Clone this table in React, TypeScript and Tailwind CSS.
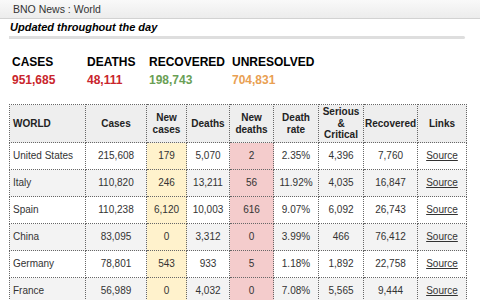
const stats = [
  { label: "CASES", value: "951,685", color: "text-[#c9252c]", w: "w-[75px]" },
  { label: "DEATHS", value: "48,111", color: "text-[#c9252c]", w: "w-[62px]" },
  { label: "RECOVERED", value: "198,743", color: "text-[#6a9f55]", w: "w-[83px]" },
  { label: "UNRESOLVED", value: "704,831", color: "text-[#e9a052]", w: "w-[100px]" },
];

const rows = [
  ["United States", "215,608", "179", "5,070", "2", "2.35%", "4,396", "7,760"],
  ["Italy", "110,820", "246", "13,211", "56", "11.92%", "4,035", "16,847"],
  ["Spain", "110,238", "6,120", "10,003", "616", "9.07%", "6,092", "26,743"],
  ["China", "83,095", "0", "3,312", "0", "3.99%", "466", "76,412"],
  ["Germany", "78,801", "543", "933", "5", "1.18%", "1,892", "22,758"],
  ["France", "56,989", "0", "4,032", "0", "7.08%", "5,565", "9,444"],
];

const cell = "border border-dotted border-[#666] px-[3px]";

export default function App() {
  return (
    <div className="w-[480px] h-[300px] overflow-hidden bg-white font-['Liberation_Sans',Arial,sans-serif]">
      {/* top bar */}
      <div className="h-[19px] border-b border-[#d2d2d2] bg-gradient-to-b from-[#f9f9f9] to-[#ececec] pl-[13px] text-[10.5px] leading-[18px] text-[#333]">
        BNO News : World
      </div>
      <div className="pl-[10px] pt-[1px] text-[11px] font-bold italic leading-[15px] text-black">
        Updated throughout the day
      </div>
      <div className="ml-[9px] mt-[1px] h-[3px] w-[456px] rounded-r-full bg-[#dedede]" />

      {/* totals */}
      <div className="flex pl-[12px] pt-[15px]">
        {stats.map((s) => (
          <div key={s.label} className={s.w}>
            <div className="text-[12px] font-bold leading-[16px] text-black">{s.label}</div>
            <div className={`mt-[1px] text-[12px] font-bold leading-[18px] ${s.color}`}>{s.value}</div>
          </div>
        ))}
      </div>

      {/* table */}
      <table className="ml-[9px] mt-[15px] w-[457px] table-fixed border-collapse text-[10px] leading-[11.5px] text-[#333]">
        <colgroup>
          <col className="w-[76px]" />
          <col className="w-[61px]" />
          <col className="w-[40px]" />
          <col className="w-[43px]" />
          <col className="w-[44px]" />
          <col className="w-[45px]" />
          <col className="w-[45px]" />
          <col className="w-[54px]" />
          <col className="w-[49px]" />
        </colgroup>
        <thead>
          <tr className="h-[38px] bg-[#eeeeee] font-bold text-[#222]">
            <th className={`${cell} text-left`}>WORLD</th>
            <th className={cell}>Cases</th>
            <th className={cell}>New<br />cases</th>
            <th className={cell}>Deaths</th>
            <th className={cell}>New<br />deaths</th>
            <th className={cell}>Death<br />rate</th>
            <th className={cell}>Serious<br />&amp;<br />Critical</th>
            <th className={`${cell} !px-0`}>Recovered</th>
            <th className={cell}>Links</th>
          </tr>
        </thead>
        <tbody>
          {rows.map((r, i) => (
            <tr key={r[0]} className={`h-[27px] ${i % 2 === 1 ? "bg-[#f3f3f3]" : "bg-white"}`}>
              <td className={`${cell} text-left`}>{r[0]}</td>
              <td className={`${cell} text-center`}>{r[1]}</td>
              <td className={`${cell} bg-[#fff2cc] text-center`}>{r[2]}</td>
              <td className={`${cell} text-center`}>{r[3]}</td>
              <td className={`${cell} bg-[#f4cccc] text-center`}>{r[4]}</td>
              <td className={`${cell} text-center`}>{r[5]}</td>
              <td className={`${cell} text-center`}>{r[6]}</td>
              <td className={`${cell} text-center`}>{r[7]}</td>
              <td className={`${cell} text-center`}>
                <a href="#" className="text-[#333] underline">Source</a>
              </td>
            </tr>
          ))}
        </tbody>
      </table>
    </div>
  );
}
